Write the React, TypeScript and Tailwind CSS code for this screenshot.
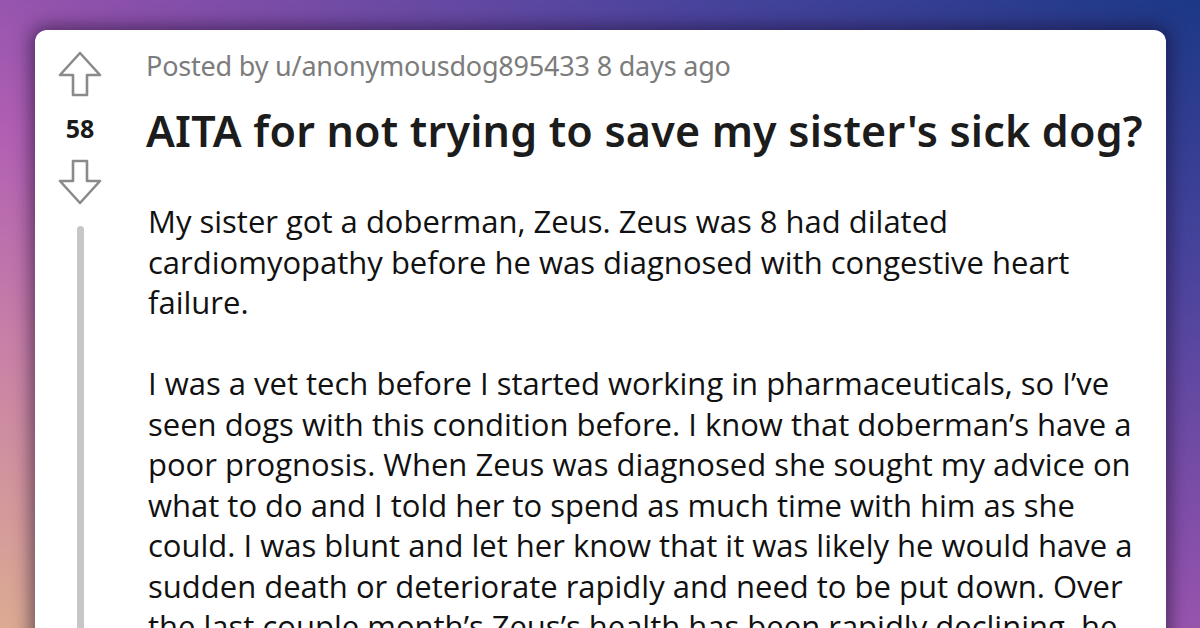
import React from "react";

const UpArrow = () => (
  <svg width="44" height="46" viewBox="0 0 44 46" fill="none">
    <path
      d="M22 2 L42 24 L29 24 L29 44 L15 44 L15 24 L2 24 Z"
      stroke="#8a8a8a"
      strokeWidth="2.6"
      strokeLinejoin="round"
    />
  </svg>
);

const DownArrow = () => (
  <svg width="44" height="46" viewBox="0 0 44 46" fill="none">
    <path
      d="M22 44 L42 22 L29 22 L29 2 L15 2 L15 22 L2 22 Z"
      stroke="#8a8a8a"
      strokeWidth="2.6"
      strokeLinejoin="round"
    />
  </svg>
);

export default function App() {
  return (
    <div className="w-[1200px] h-[628px] overflow-hidden bg-[linear-gradient(to_bottom_left,#1b3886_0%,#4a449d_22%,#8a50ab_45%,#b05fb3_60%,#c982a6_78%,#dcab92_100%)] pl-[35px] pt-[30px]">
      <div className="w-[1131px] h-[640px] bg-white rounded-[12px] shadow-[0_0_18px_4px_rgba(20,10,40,0.55)] flex">
        <div className="w-[90px] flex flex-col items-center pt-[21px] shrink-0">
          <UpArrow />
          <div className="mt-[16px] text-[25px] leading-[30px] font-bold text-[#1a1a1b] font-['Noto_Sans',sans-serif]">
            58
          </div>
          <div className="mt-[16px]">
            <DownArrow />
          </div>
          <div className="mt-[21px] w-[7px] flex-1 bg-[#c6c6c6] rounded-t-full"></div>
        </div>
        <div className="pl-[21px] pt-[18px] flex-1">
          <div className="text-[27px] leading-[36px] text-[#7c7c7c] font-['Noto_Sans',sans-serif] tracking-[-0.2px] whitespace-nowrap">
            Posted by u/anonymousdog895433 8 days ago
          </div>
          <h1 className="mt-[22px] text-[43px] leading-[50px] font-semibold text-[#1c1c1c] font-['Noto_Sans',sans-serif] whitespace-nowrap tracking-[0.2px]">
            AITA for not trying to save my sister's sick dog?
          </h1>
          <div className="mt-[45px] pl-[2px] text-[31px] leading-[40.5px] text-[#111111] font-['Open_Sans',sans-serif] whitespace-nowrap">
            <p>
              My sister got a doberman, Zeus. Zeus was 8 had dilated
              <br />
              cardiomyopathy before he was diagnosed with congestive heart
              <br />
              failure.
            </p>
            <p className="mt-[40.5px]">
              I was a vet tech before I started working in pharmaceuticals, so I’ve
              <br />
              seen dogs with this condition before. I know that doberman’s have a
              <br />
              poor prognosis. When Zeus was diagnosed she sought my advice on
              <br />
              what to do and I told her to spend as much time with him as she
              <br />
              could. I was blunt and let her know that it was likely he would have a
              <br />
              sudden death or deteriorate rapidly and need to be put down. Over
              <br />
              the last couple month’s Zeus’s health has been rapidly declining, he
            </p>
          </div>
        </div>
      </div>
    </div>
  );
}
